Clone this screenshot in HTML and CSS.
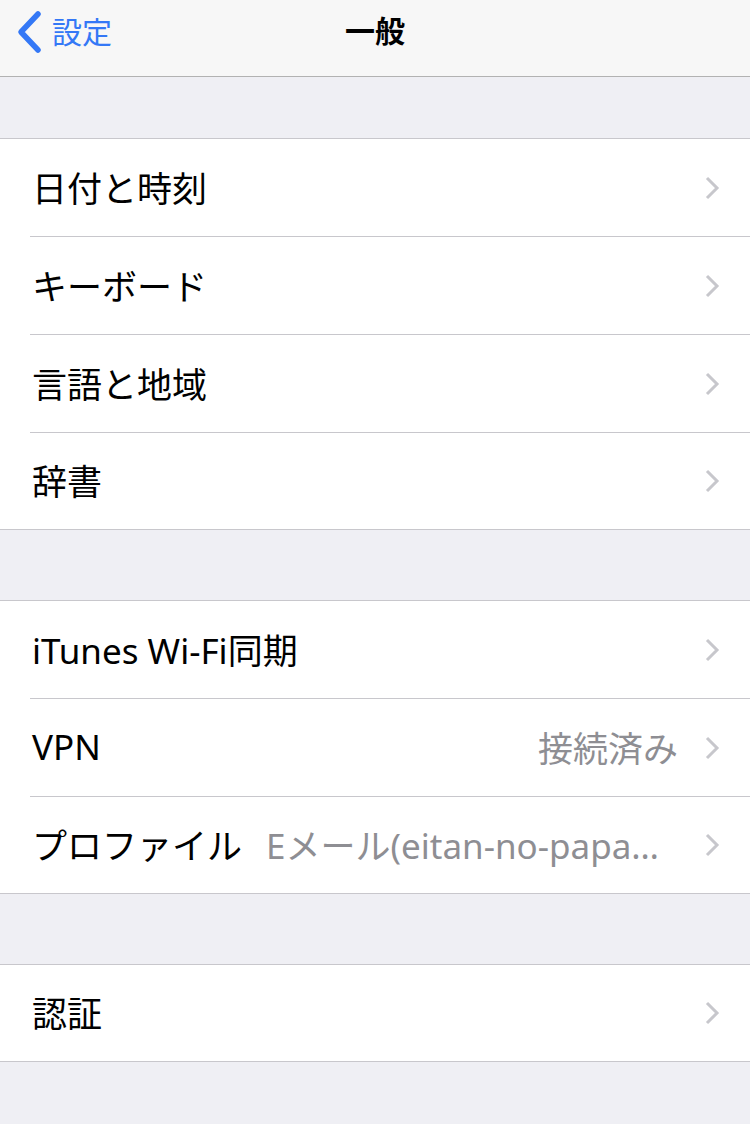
FILE: index.html
```html
<!DOCTYPE html>
<html lang="ja">
<head>
    <meta charset="UTF-8">
    <meta name="viewport" content="width=device-width, initial-scale=1.0">
    <title>一般</title>
    <link rel="stylesheet" href="styles.css">
</head>
<body>
    <header class="navbar">
        <a class="back">
            <svg class="back-icon" width="28" height="44" viewBox="0 0 28 44">
                <polyline points="22,4 5,22 22,40" fill="none" stroke="#3478f6" stroke-width="5.5" stroke-linecap="round" stroke-linejoin="round"/>
            </svg>
            <span>設定</span>
        </a>
        <h1 class="title">一般</h1>
    </header>

    <div class="gap"></div>
    <ul class="group">
        <li class="row"><span class="label">日付と時刻</span><svg class="chev" viewBox="0 0 16 24"><polyline points="3,2 13,12 3,22"/></svg></li>
        <li class="row"><span class="label">キーボード</span><svg class="chev" viewBox="0 0 16 24"><polyline points="3,2 13,12 3,22"/></svg></li>
        <li class="row"><span class="label">言語と地域</span><svg class="chev" viewBox="0 0 16 24"><polyline points="3,2 13,12 3,22"/></svg></li>
        <li class="row"><span class="label">辞書</span><svg class="chev" viewBox="0 0 16 24"><polyline points="3,2 13,12 3,22"/></svg></li>
    </ul>

    <div class="gap"></div>
    <ul class="group">
        <li class="row"><span class="label">iTunes Wi-Fi同期</span><svg class="chev" viewBox="0 0 16 24"><polyline points="3,2 13,12 3,22"/></svg></li>
        <li class="row"><span class="label">VPN</span><span class="detail">接続済み</span><svg class="chev" viewBox="0 0 16 24"><polyline points="3,2 13,12 3,22"/></svg></li>
        <li class="row"><span class="label">プロファイル</span><span class="detail">Eメール(eitan-no-papa@example.jp)</span><svg class="chev" viewBox="0 0 16 24"><polyline points="3,2 13,12 3,22"/></svg></li>
    </ul>

    <div class="gap"></div>
    <ul class="group">
        <li class="row"><span class="label">認証</span><svg class="chev" viewBox="0 0 16 24"><polyline points="3,2 13,12 3,22"/></svg></li>
    </ul>
</body>
</html>
```

FILE: styles.css
```css
body {
    margin: 0;
    background-color: #efeff4;
    font-family: "Noto Sans", "Noto Sans CJK JP", sans-serif;
    color: #000;
}
.navbar {
    position: relative;
    height: 76px;
    background-color: #f7f7f7;
    border-bottom: 1px solid #b2b2b2;
    display: flex;
    align-items: center;
    justify-content: center;
}
.back {
    position: absolute;
    left: 16px;
    top: 10px;
    display: flex;
    align-items: center;
    gap: 8px;
    color: #3478f6;
    font-size: 30px;
    line-height: 44px;
}
.back-icon {
    display: block;
}
.title {
    margin: 0;
    font-size: 30px;
    font-weight: 700;
    line-height: 1;
    margin-top: -14px;
}
.gap {
    height: 61px;
}
.group {
    list-style: none;
    margin: 0;
    padding: 0 0 0 30px;
    background: #fff;
    border-top: 1px solid #c8c7cc;
    border-bottom: 1px solid #c8c7cc;
}
.group + .gap {
    height: 70px;
}
.row {
    height: 97px;
    display: flex;
    align-items: center;
    padding-right: 30px;
    border-bottom: 1px solid #c8c7cc;
    font-size: 35px;
}
.row:last-child {
    border-bottom: none;
    height: 96px;
}
.label {
    padding-left: 2px;
    white-space: nowrap;
    margin-right: auto;
    margin-top: -3px;
}
.detail {
    color: #8e8e93;
    white-space: nowrap;
    overflow: hidden;
    text-overflow: ellipsis;
    margin-left: 24px;
    margin-top: -3px;
    min-width: 0;
}
.chev {
    flex: none;
    width: 16px;
    height: 24px;
    margin-left: 26px;
    fill: none;
    stroke: #c7c7cc;
    stroke-width: 3;
}
```
